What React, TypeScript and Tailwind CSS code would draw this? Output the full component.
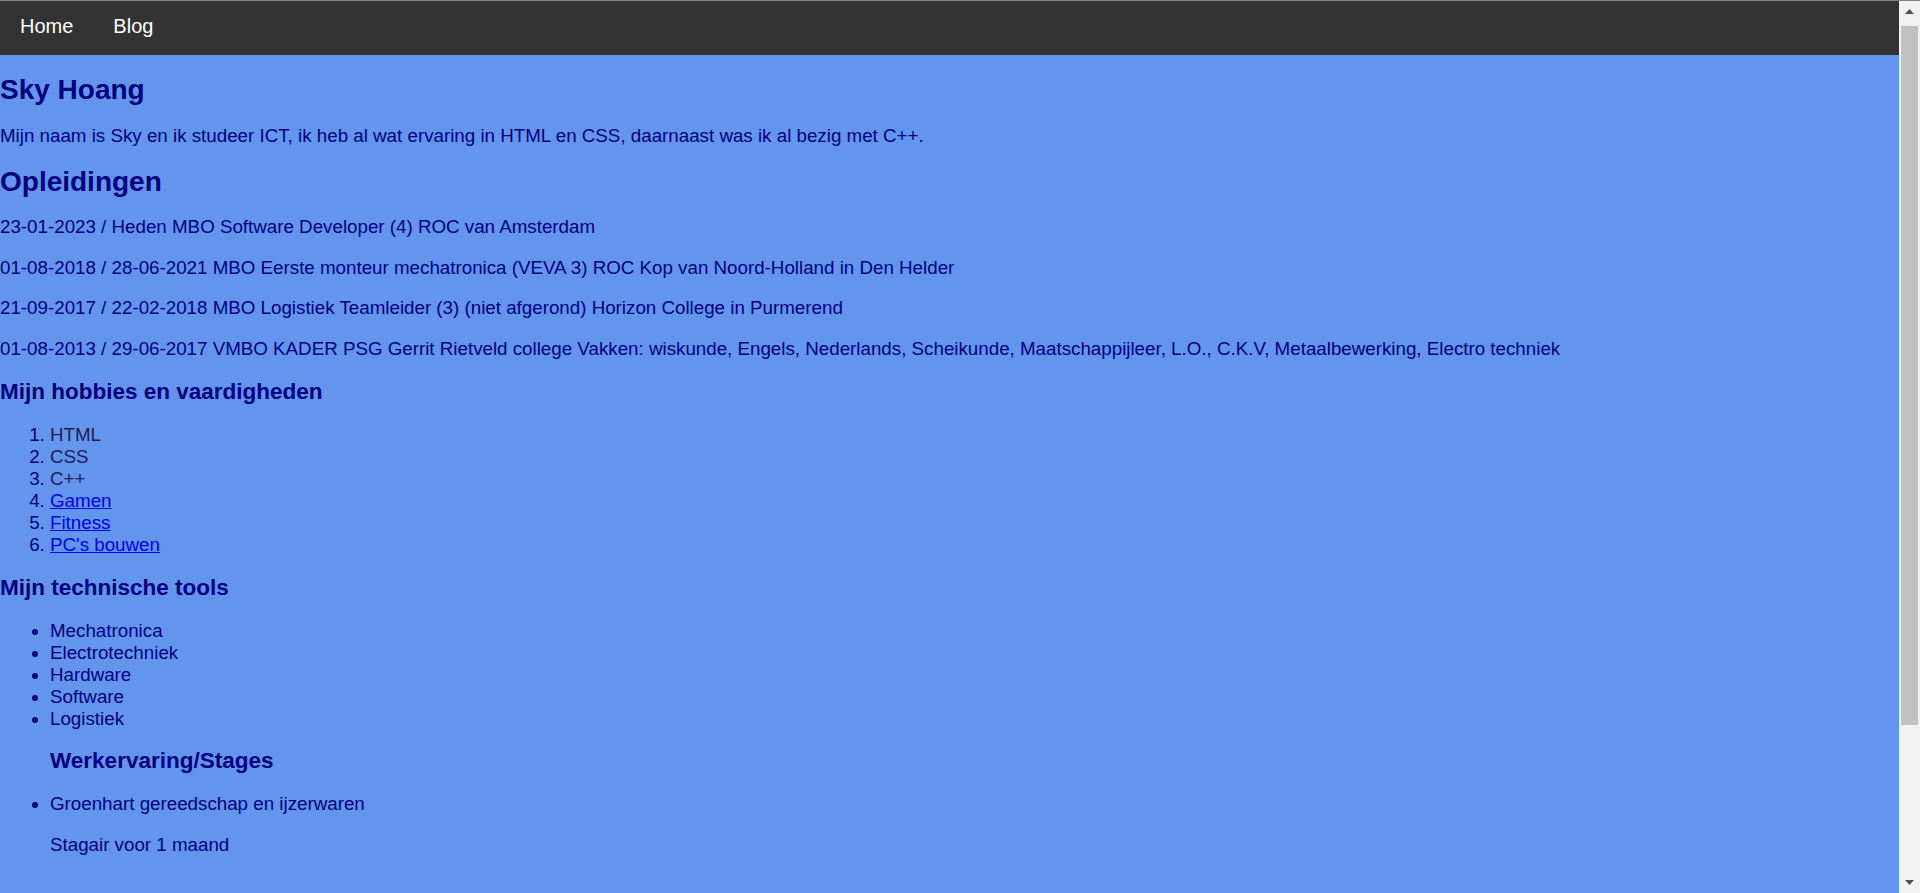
import React from "react";

const font = { fontFamily: '"Liberation Sans", Arial, sans-serif' };

function Arrow({ up }: { up: boolean }) {
  return (
    <svg width="9" height="5" viewBox="0 0 9 5">
      <polygon points={up ? "0,5 4.5,0 9,5" : "0,0 9,0 4.5,5"} fill="#505050" />
    </svg>
  );
}

export default function App() {
  return (
    <div className="w-[1920px] h-[893px] overflow-hidden flex flex-col bg-[#6495ED]" style={font}>
      <div className="h-px bg-[#7f7f7f] shrink-0" />
      <div className="flex flex-1 min-h-0">
        <div className="flex-1 flex flex-col text-[#000080] text-[18.75px] leading-[22px]">
          <nav className="h-[54px] bg-[#333333] shrink-0 flex items-start">
            <a className="px-5 pt-[14px] text-white text-[20px] leading-[23px]">Home</a>
            <a className="px-5 pt-[14px] text-white text-[20px] leading-[23px]">Blog</a>
          </nav>
          <div className="flex flex-col">
            <h1 className="mt-[19px] text-[28px] leading-[32px] font-bold">Sky Hoang</h1>
            <p className="mt-[18.6px]">
              Mijn naam is Sky en ik studeer ICT, ik heb al wat ervaring in HTML en CSS, daarnaast was ik al bezig met C++.
            </p>
            <h1 className="mt-[19.3px] text-[28px] leading-[32px] font-bold">Opleidingen</h1>
            <p className="mt-[18px]">23-01-2023 / Heden MBO Software Developer (4) ROC van Amsterdam</p>
            <p className="mt-[18.7px]">
              01-08-2018 / 28-06-2021 MBO Eerste monteur mechatronica (VEVA 3) ROC Kop van Noord-Holland in Den Helder
            </p>
            <p className="mt-[18.7px]">
              21-09-2017 / 22-02-2018 MBO Logistiek Teamleider (3) (niet afgerond) Horizon College in Purmerend
            </p>
            <p className="mt-[18.7px]">
              01-08-2013 / 29-06-2017 VMBO KADER PSG Gerrit Rietveld college Vakken: wiskunde, Engels, Nederlands,
              Scheikunde, Maatschappijleer, L.O., C.K.V, Metaalbewerking, Electro techniek
            </p>
            <h3 className="mt-[19px] text-[22.5px] leading-[26px] font-bold">Mijn hobbies en vaardigheden</h3>
            <ol className="mt-[18.7px] list-decimal pl-[50px]">
              <li><span className="text-[#1d1d5a]">HTML</span></li>
              <li><span className="text-[#1d1d5a]">CSS</span></li>
              <li><span className="text-[#1d1d5a]">C++</span></li>
              <li><a className="text-[#0000ee] underline">Gamen</a></li>
              <li><a className="text-[#0000ee] underline">Fitness</a></li>
              <li><a className="text-[#0000ee] underline">PC's bouwen</a></li>
            </ol>
            <h3 className="mt-[19px] text-[22.5px] leading-[26px] font-bold">Mijn technische tools</h3>
            <ul className="mt-[19px] list-disc pl-[50px]">
              <li>Mechatronica</li>
              <li>Electrotechniek</li>
              <li>Hardware</li>
              <li>Software</li>
              <li>Logistiek</li>
              <h3 className="mt-[18.4px] text-[22.5px] leading-[26px] font-bold">Werkervaring/Stages</h3>
              <li className="mt-[18.6px]">Groenhart gereedschap en ijzerwaren</li>
              <p className="mt-[19.7px]">Stagair voor 1 maand</p>
            </ul>
          </div>
        </div>
        <div className="w-[21px] shrink-0 bg-[#f1f1f1] flex flex-col">
          <div className="h-[21px] flex items-center justify-center">
            <Arrow up />
          </div>
          <div className="mt-[4px] h-[699px] mx-[2px] bg-[#c1c1c1]" />
          <div className="flex-1" />
          <div className="h-[21px] flex items-center justify-center">
            <Arrow up={false} />
          </div>
        </div>
      </div>
    </div>
  );
}
